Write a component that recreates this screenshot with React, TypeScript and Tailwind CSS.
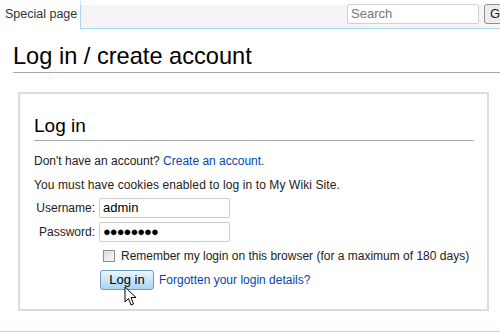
import React from "react";

export default function App() {
  return (
    <div className="relative w-[500px] h-[332px] overflow-hidden bg-white text-[#222]" style={{ fontFamily: '"Liberation Sans", Arial, sans-serif' }}>
      {/* top bar */}
      <div className="flex h-[29px]">
        <div className="w-[80px] shrink-0 bg-white pl-[5px] pt-[7px] text-[12.5px] leading-[15px] text-[#333] whitespace-nowrap">Special page</div>
        <div className="flex-1 flex flex-col min-w-0">
          <div className="h-[5px] bg-white border-l border-[#d6ecfb]" />
          <div className="flex-1 flex items-start bg-[#f6f4f4] border-l border-[#a7d7f9] border-b border-b-[#a7d7f9]">
            <div className="ml-[266px] mt-[-1px] flex gap-[5px] shrink-0">
              <div className="w-[132px] h-[20px] shrink-0 bg-white border border-[#d0d0d0] rounded-[2px] pl-[3px] text-[13px] leading-[18px] text-[#777]">Search</div>
              <div className="w-[30px] h-[20px] shrink-0 bg-[#ececec] border border-[#909090] rounded-[3px] pl-[5px] text-[13px] leading-[18px] text-[#222]">Go</div>
            </div>
          </div>
        </div>
      </div>

      {/* heading */}
      <div className="ml-[13px] mt-[12px] border-b border-[#aaa] pb-[1px]">
        <h1 className="text-[23.6px] leading-[30px] text-black">Log in / create account</h1>
      </div>

      {/* fieldset */}
      <div className="ml-[18px] mt-[19px] w-[471px] h-[219px] border-2 border-[#dcdcdc] pl-[14px] pr-[13px] pt-[20px]">
        <div className="border-b border-[#aaa] pb-[2px]">
          <div className="text-[19px] leading-[24px] text-black">Log in</div>
        </div>
        <p className="mt-[12px] text-[12px] leading-[16px]">
          Don't have an account? <span className="text-[#0645ad]">Create an account.</span>
        </p>
        <p className="mt-[8px] text-[12px] leading-[16px] tracking-[0.1px]">You must have cookies enabled to log in to My Wiki Site.</p>
        <div className="mt-[5px] ml-[-14px] flex flex-col gap-[4px]">
          <div className="flex items-center">
            <div className="w-[79px] text-right text-[12px] pr-[4px]">Username:</div>
            <div className="w-[131px] h-[20px] border border-[#ccc] rounded-[2px] pl-[3px] text-[13px] leading-[18px] text-black">admin</div>
          </div>
          <div className="flex items-center">
            <div className="w-[79px] text-right text-[12px] pr-[4px]">Password:</div>
            <div className="w-[131px] h-[20px] border border-[#ccc] rounded-[2px] pl-[3px] text-[13px] leading-[18px] text-black tracking-[-1px]">●●●●●●●●</div>
          </div>
        </div>
        <div className="mt-[5px] ml-[69px] flex items-center">
          <div className="w-[12px] h-[12px] border border-[#8f8f8f] bg-gradient-to-br from-[#dcdcdc] to-[#f8f8f8]" />
          <span className="ml-[6px] text-[12px]">Remember my login on this browser (for a maximum of 180 days)</span>
        </div>
        <div className="mt-[5px] ml-[66px] flex items-center">
          <div className="w-[54px] h-[20px] border border-[#6f9bc9] rounded-[3px] bg-gradient-to-b from-[#eaf5fe] to-[#a9d4f4] text-center text-[13px] leading-[18px] text-black">Log in</div>
          <span className="ml-[5px] text-[12px] text-[#0645ad]">Forgotten your login details?</span>
        </div>
      </div>

      {/* bottom line */}
      <div className="absolute left-0 right-0 top-[331px] h-px bg-[#a7d7f9]" />

      {/* cursor */}
      <svg className="absolute left-[124px] top-[286px]" width="14" height="21" viewBox="0 0 14 21">
        <path d="M1 1 L1 16 L4.5 12.5 L7 19 L9.5 18 L7 11.5 L12 11.5 Z" fill="#fff" stroke="#000" strokeWidth="1" strokeLinejoin="miter" />
      </svg>
    </div>
  );
}
